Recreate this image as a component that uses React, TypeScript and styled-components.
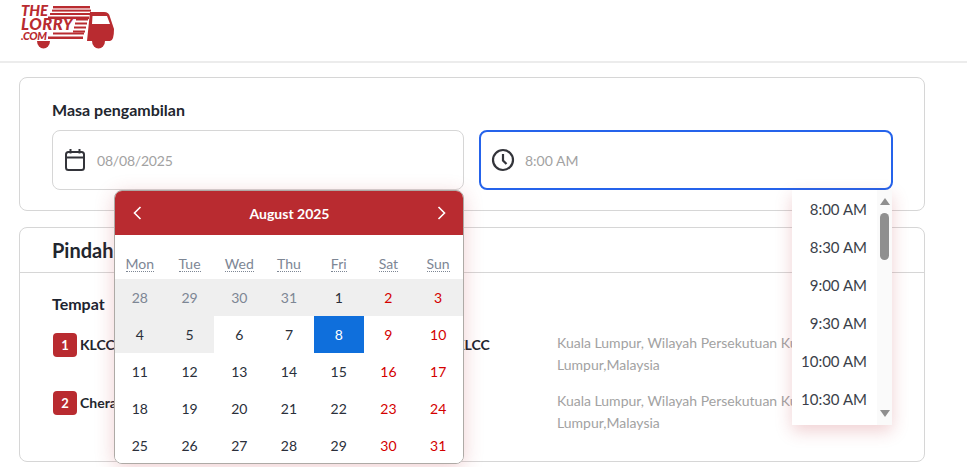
import React from "react";
import styled, { createGlobalStyle } from "styled-components";

const Global = createGlobalStyle`
  html, body { margin: 0; padding: 0; background: #fff; }
  body { font-family: "Lato", "Liberation Sans", sans-serif; color: #1e2430; overflow: hidden; }
  * { box-sizing: border-box; }
`;

const Page = styled.div`
  width: 967px;
  height: 467px;
  overflow: hidden;
`;
const Header = styled.header`
  height: 63px;
  padding: 0 0 0 19px;
  border-bottom: 2px solid #ececec;
`;
const Main = styled.main`
  padding: 14px 42px 0 19px;
  display: flex;
  flex-direction: column;
  gap: 16px;
`;
const Card = styled.section`
  border: 1px solid #d6d6d6;
  border-radius: 8px;
  background: #fff;
`;
const TimeCard = styled(Card)`
  height: 134px;
  padding: 22px 31px 0 32px;
`;
const FieldLabel = styled.div`
  font-size: 16px;
  font-weight: 700;
  line-height: 20px;
  color: #22262e;
  margin-bottom: 10px;
`;
const Fields = styled.div`
  display: grid;
  grid-template-columns: 412px 414px;
  gap: 15px;
`;
const FieldWrap = styled.div`
  position: relative;
  height: 60px;
`;
const Field = styled.div<{ $focused?: boolean }>`
  height: 60px;
  display: flex;
  align-items: center;
  gap: ${(p) => (p.$focused ? "10px" : "12px")};
  border-radius: 8px;
  border: ${(p) => (p.$focused ? "2px solid #2563eb" : "1px solid #d6d6d6")};
  padding-left: ${(p) => (p.$focused ? "10px" : "12px")};
  font-size: 14px;
  letter-spacing: ${(p) => (p.$focused ? "0" : "-0.2px")};
  color: #a2a2a2;
`;
const Calendar = styled.div`
  position: absolute;
  z-index: 5;
  left: 62px;
  top: 60px;
  width: 350px;
  height: 274px;
  background: #fff;
  border: 1px solid #aeaaa6;
  border-radius: 8px;
  overflow: hidden;
`;
const CalShadow = styled.div`
  position: absolute;
  z-index: 4;
  left: 62px;
  top: 60px;
  width: 350px;
  height: 274px;
  border-radius: 8px;
  box-shadow: 0 4px 20px rgba(186, 43, 48, 0.22);
`;
const CalHead = styled.div`
  height: 44px;
  background: #b92b30;
  color: #fff;
  display: flex;
  align-items: center;
  justify-content: space-between;
  padding: 0 14px 0 15px;
  font-size: 14px;
  font-weight: 700;
`;
const Nav = styled.svg`
  width: 16px;
  height: 16px;
  fill: none;
  stroke: #fff;
  stroke-width: 1.6;
`;
const WeekRow = styled.div`
  display: grid;
  grid-template-columns: repeat(7, 1fr);
  height: 44px;
  align-items: end;
  padding-bottom: 7px;
`;
const WeekDay = styled.div`
  text-align: center;
  font-size: 14px;
  line-height: 16px;
  color: #7d8694;
`;
const Abbr = styled.span`
  border-bottom: 1px dotted #7d8694;
  display: inline-block;
  line-height: 15px;
`;
const DayGrid = styled.div`
  display: grid;
  grid-template-columns: repeat(7, 1fr);
  grid-auto-rows: 37px;
`;
const Day = styled.div<{ $tone: string; $bg: string }>`
  display: flex;
  align-items: center;
  justify-content: center;
  padding-bottom: 1px;
  font-size: 14px;
  color: ${(p) => p.$tone};
  background: ${(p) => p.$bg};
`;
const TimeMenu = styled.div`
  position: absolute;
  z-index: 5;
  top: 60px;
  right: 1px;
  width: 100px;
  height: 235px;
  background: #fff;
  display: flex;
  box-shadow: 0 6px 16px rgba(186, 43, 48, 0.22);
`;
const TimeList = styled.div`
  flex: 1;
`;
const TimeItem = styled.div`
  height: 38px;
  display: flex;
  align-items: center;
  justify-content: flex-end;
  padding-right: 10px;
  font-size: 15px;
  color: #3b3f4a;
`;
const Rail = styled.div`
  width: 15px;
  background: #fafafa;
  display: flex;
  flex-direction: column;
  align-items: center;
  padding: 8px 3px;
`;
const ArrowUp = styled.div`
  border: 5px solid transparent;
  border-top: 0;
  border-bottom: 7px solid #8f8f8f;
`;
const ArrowDown = styled.div`
  border: 5px solid transparent;
  border-bottom: 0;
  border-top: 7px solid #8f8f8f;
  margin-top: auto;
`;
const Thumb = styled.div`
  width: 9px;
  height: 47px;
  margin-top: 8px;
  border-radius: 5px;
  background: #8f8f8f;
`;
const MoveCard = styled(Card)`
  height: 235px;
`;
const CardTitle = styled.h2`
  margin: 0;
  height: 45px;
  padding: 0 32px 1px;
  display: flex;
  align-items: center;
  font-size: 20px;
  font-weight: 700;
  color: #22262e;
  border-bottom: 1px solid #d6d6d6;
`;
const CardBody = styled.div`
  padding: 21px 32px 0;
`;
const SectionLabel = styled.div`
  font-size: 16px;
  font-weight: 700;
  line-height: 20px;
  margin-bottom: 18px;
`;
const Stop = styled.div`
  display: grid;
  grid-template-columns: 403px 102px 1fr;
  height: 58px;
  font-size: 14px;
`;
const StopName = styled.div`
  display: flex;
  gap: 3px;
  padding-left: 1px;
  font-weight: 700;
  line-height: 26px;
  color: #22262e;
`;
const Badge = styled.span`
  width: 24px;
  height: 24px;
  margin-top: 1px;
  border-radius: 4px;
  background: #b92b30;
  color: #fff;
  font-size: 13px;
  display: flex;
  align-items: center;
  justify-content: center;
`;
const Venue = styled.div`
  font-weight: 700;
  line-height: 26px;
  color: #22262e;
`;
const Address = styled.div`
  color: #a2a2a2;
  line-height: 22px;
`;

const G = "#7d8694";
const D = "#2a2f3a";
const R = "#d40000";
const days = [
  28, 29, 30, 31, 1, 2, 3, 4, 5, 6, 7, 8, 9, 10, 11, 12, 13, 14, 15, 16, 17, 18, 19, 20, 21, 22, 23, 24, 25, 26, 27, 28, 29, 30, 31,
];

const times = ["8:00 AM", "8:30 AM", "9:00 AM", "9:30 AM", "10:00 AM", "10:30 AM"];
const weekdays = ["Mon", "Tue", "Wed", "Thu", "Fri", "Sat", "Sun"];

function Logo() {
  return (
    <svg width="97" height="50" viewBox="0 0 97 50" aria-label="The Lorry">
      <g fill="#b92b30">
        <text x="2" y="16" fontFamily="Lato" fontWeight="900" fontStyle="italic" fontSize="15" textLength="27">THE</text>
        <text x="2" y="30" fontFamily="Lato" fontWeight="900" fontStyle="italic" fontSize="16.5" textLength="52">LORRY</text>
        <text x="2" y="40" fontFamily="Lato" fontWeight="900" fontStyle="italic" fontSize="11" textLength="26">.COM</text>
        <rect x="34" y="6" width="37" height="2.4" />
        <rect x="33" y="9.6" width="39" height="2" />
        <rect x="31" y="13" width="40" height="2" />
        <rect x="29" y="16.5" width="41" height="2.6" />
        <rect x="57" y="18.5" width="12" height="2" />
        <rect x="56" y="22.5" width="12" height="2" />
        <rect x="55" y="26.5" width="12" height="2" />
        <rect x="54" y="30.5" width="12" height="2" />
        <rect x="34" y="32.5" width="31" height="2" />
        <rect x="29" y="36.5" width="35" height="2.5" />
        <path d="M71 12 H85 Q90 12 91 17 L95 29 Q95 41 91 41 H68 Z" />
        <path d="M18 41 H31 A6.5 7.5 0 0 1 18 41 Z" />
        <path d="M73 41 H86 A6.5 7.5 0 0 1 73 41 Z" />
      </g>
      <path d="M73.500 16 H88 L91 24 H73 Z" fill="#fff" />
    </svg>
  );
}

export default function App() {
  return (
    <Page>
      <Global />
      <Header>
        <Logo />
      </Header>
      <Main>
        <TimeCard>
          <FieldLabel>Masa pengambilan</FieldLabel>
          <Fields>
            <FieldWrap>
              <Field>
                <svg width="20" height="22" viewBox="0 0 20 22" fill="none" stroke="#33343a" strokeWidth="2">
                  <rect x="1" y="3" width="18" height="18" rx="2.500" />
                  <path d="M1 8.500h18M5.500 0v4.500M14.500 0v4.500" />
                </svg>
                08/08/2025
              </Field>
              <CalShadow />
              <Calendar>
                <CalHead>
                  <Nav viewBox="0 0 16 16"><path d="M10.500 2 L4.500 8 L10.500 14" /></Nav>
                  August 2025
                  <Nav viewBox="0 0 16 16"><path d="M5.500 2 L11.500 8 L5.500 14" /></Nav>
                </CalHead>
                <WeekRow>
                  {weekdays.map((w) => (
                    <WeekDay key={w}><Abbr>{w}</Abbr></WeekDay>
                  ))}
                </WeekRow>
                <DayGrid>
                  {days.map((d, i) => {
                    const prev = i < 4;
                    const weekend = i % 7 >= 5;
                    const selected = i === 11;
                    const past = i < 9;
                    return (
                      <Day
                        key={i}
                        $tone={selected ? "#fff" : prev ? G : weekend ? R : D}
                        $bg={selected ? "#0f6fdc" : past ? "#efefef" : "#fff"}
                      >
                        {d}
                      </Day>
                    );
                  })}
                </DayGrid>
              </Calendar>
            </FieldWrap>
            <FieldWrap>
              <Field $focused>
                <svg width="24" height="24" viewBox="0 0 24 24" fill="none" stroke="#33343a" strokeWidth="2.200">
                  <circle cx="12" cy="12" r="10" />
                  <path d="M12 6v6.500l3.500 3.500" />
                </svg>
                8:00 AM
              </Field>
              <TimeMenu>
                <TimeList>
                  {times.map((t) => (
                    <TimeItem key={t}>{t}</TimeItem>
                  ))}
                </TimeList>
                <Rail>
                  <ArrowUp />
                  <Thumb />
                  <ArrowDown />
                </Rail>
              </TimeMenu>
            </FieldWrap>
          </Fields>
        </TimeCard>
        <MoveCard>
          <CardTitle>Pindah</CardTitle>
          <CardBody>
            <SectionLabel>Tempat</SectionLabel>
            <Stop>
              <StopName><Badge>1</Badge>KLCC</StopName>
              <Venue>KLCC</Venue>
              <Address>Kuala Lumpur, Wilayah Persekutuan Kuala Lumpur,Malaysia</Address>
            </Stop>
            <Stop>
              <StopName><Badge>2</Badge>Cheras</StopName>
              <Venue />
              <Address>Kuala Lumpur, Wilayah Persekutuan Kuala Lumpur,Malaysia</Address>
            </Stop>
          </CardBody>
        </MoveCard>
      </Main>
    </Page>
  );
}
